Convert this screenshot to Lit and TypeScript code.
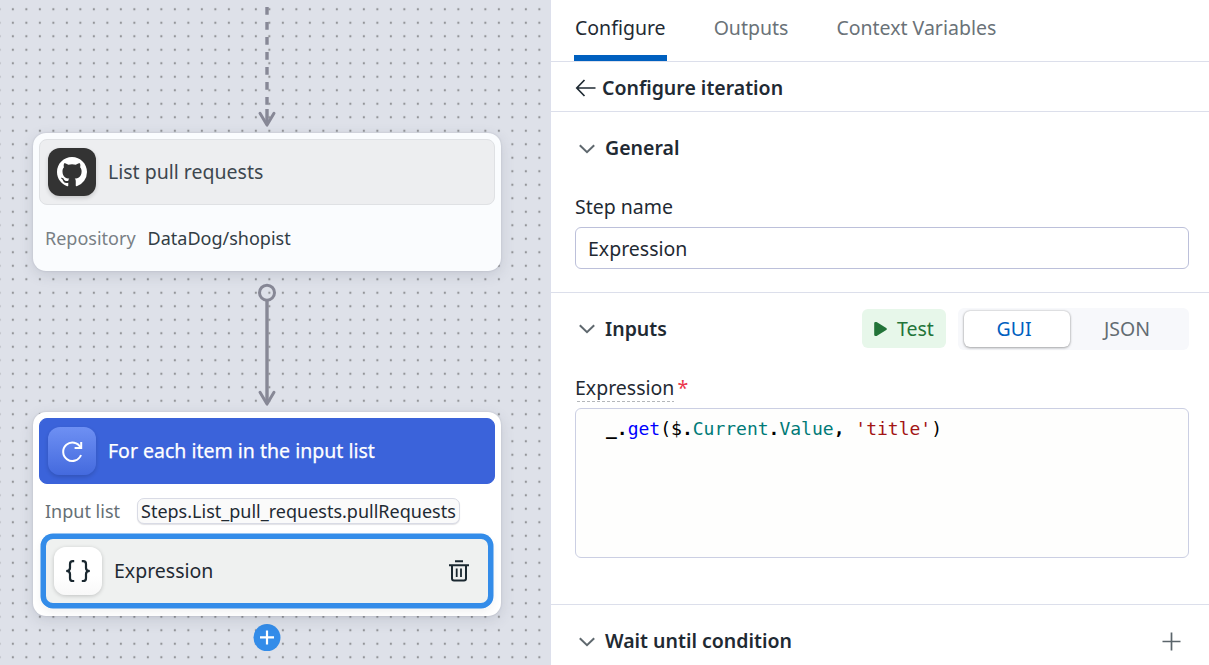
import { LitElement, html, css, svg } from "lit";
import { customElement, property } from "lit/decorators.js";

const chevron = html`<svg width="16" height="10" viewBox="0 0 16 10" fill="none">
  <path d="M0.8 1.2 L8 8.2 L15.2 1.2" stroke="#5f686e" stroke-width="2" />
</svg>`;

@customElement("flow-canvas")
export class FlowCanvas extends LitElement {
  static styles = css`
    :host {
      display: block;
      position: relative;
      overflow: hidden;
      background: #dee1e9;
      color: #1f2a33;
    }
    .backdrop {
      position: absolute;
      inset: 0;
      width: 100%;
      height: 100%;
    }
    .card {
      position: absolute;
      left: 33px;
      width: 468px;
      box-sizing: border-box;
      padding: 6px;
      border-radius: 13px;
      box-shadow: 0 0 2px rgba(60, 65, 90, 0.2), 0 4px 14px rgba(60, 65, 90, 0.15);
    }
    .source {
      top: 133px;
      height: 138px;
      background: #fafcfe;
    }
    .loop {
      top: 412px;
      height: 204px;
      background: #fff;
    }
    .head {
      display: flex;
      align-items: center;
      gap: 12px;
      box-sizing: border-box;
      height: 66px;
      padding: 0 8px;
      border: 1px solid #dfe1e4;
      border-radius: 8px;
      background: #edeef0;
      color: #3d474f;
      line-height: 26px;
    }
    .loop .head {
      background: #3b63da;
      border-color: #3b63da;
      color: #fff;
      -webkit-text-stroke: 0.25px #fff;
    }
    .tile {
      display: flex;
      align-items: center;
      justify-content: center;
      flex: none;
      width: 48px;
      height: 48px;
      border-radius: 12px;
      background: #333;
      box-shadow: 0 2px 4px rgba(0, 0, 0, 0.16);
    }
    .tile.repeat {
      background: linear-gradient(#6e90f3, #446ade);
    }
    .tile.code {
      background: linear-gradient(#fff 60%, #f8f8f8);
      box-shadow: 0 1px 4px rgba(0, 0, 0, 0.2);
    }
    .field {
      display: flex;
      align-items: center;
      padding-left: 6px;
      font-size: 18px;
      line-height: 26px;
    }
    .source .field {
      margin-top: 20px;
      gap: 12px;
      color: #323d45;
    }
    .key {
      color: #787f85;
    }
    .loop .field {
      margin-top: 14px;
      gap: 17px;
    }
    .loop .key {
      color: #666f75;
    }
    .chip {
      box-sizing: border-box;
      height: 26px;
      line-height: 24px;
      padding: 0 3.5px 0 3px;
      border: 1px solid #d9dbe5;
      border-radius: 7px;
      background: #fafafa;
      box-shadow: 0 1px 1px rgba(50, 50, 70, 0.14);
      white-space: nowrap;
    }
    .step {
      display: flex;
      align-items: center;
      box-sizing: border-box;
      margin: 10px 2px 0;
      height: 74px;
      padding: 0 19px 0 8px;
      border: 5px solid #338ce9;
      border-radius: 12px;
      background: #eff1f0;
      box-shadow: 0 0 0 0.5px #338ce9, 0 4px 10px rgba(0, 0, 0, 0.06);
    }
    .step-name {
      flex: 1;
      padding-left: 12px;
      line-height: 26px;
    }
  `;

  render() {
    return html`
      <svg class="backdrop">
        <defs>
          <pattern id="dots" x="6.1" y="2.5" width="13.5" height="13.5" patternUnits="userSpaceOnUse">
            <circle cx="6.75" cy="6.75" r="1.15" fill="#929498" />
          </pattern>
        </defs>
        <rect width="100%" height="100%" fill="url(#dots)" />
        <g stroke="#878896" stroke-width="3.4" fill="none">
          <path d="M267 7 V106" stroke-dasharray="7.7 7.3" />
          <path d="M267 109 V124" />
          ${this.arrowTip(126.6)}
          <circle cx="267" cy="292.7" r="7.5" stroke-width="3" />
          <path d="M267 300 V403" />
          ${this.arrowTip(405.6)}
        </g>
        <circle cx="267" cy="637.6" r="13.5" fill="#338ce9" />
        <path d="M267 630.4 V644.4 M260 637.4 H274" stroke="#fff" stroke-width="2.2" />
      </svg>
      <section class="card source">
        <div class="head">
          <div class="tile">
            <svg width="30" height="30" viewBox="0 0 16 16" fill="#fff">
              <path
                d="M8 0C3.58 0 0 3.58 0 8c0 3.54 2.29 6.53 5.47 7.59.4.07.55-.17.55-.38 0-.19-.01-.82-.01-1.49-2.01.37-2.53-.49-2.69-.94-.09-.23-.48-.94-.82-1.13-.28-.15-.68-.52-.01-.53.63-.01 1.08.58 1.23.82.72 1.21 1.87.87 2.33.66.07-.52.28-.87.51-1.07-1.78-.2-3.64-.89-3.64-3.95 0-.87.31-1.59.82-2.15-.08-.2-.36-1.02.08-2.12 0 0 .67-.21 2.2.82.64-.18 1.32-.27 2-.27s1.36.09 2 .27c1.53-1.04 2.2-.82 2.2-.82.44 1.1.16 1.92.08 2.12.51.56.82 1.27.82 2.15 0 3.07-1.87 3.75-3.65 3.95.29.25.54.73.54 1.48 0 1.07-.01 1.93-.01 2.2 0 .21.15.46.55.38A8.01 8.01 0 0 0 16 8c0-4.42-3.58-8-8-8z"
              />
            </svg>
          </div>
          <span>List pull requests</span>
        </div>
        <div class="field"><span class="key">Repository</span><span>DataDog/shopist</span></div>
      </section>
      <section class="card loop">
        <div class="head">
          <div class="tile repeat">
            <svg width="24" height="24" viewBox="0 0 24 24" fill="none" stroke="#fff" stroke-width="2">
              <path d="M21 16 A9.2 9.2 0 1 1 20.6 8.6" />
              <path d="M21.2 3 V9 H14.6" />
            </svg>
          </div>
          <span>For each item in the input list</span>
        </div>
        <div class="field">
          <span class="key">Input list</span><span class="chip">Steps.List_pull_requests.pullRequests</span>
        </div>
        <div class="step">
          <div class="tile code">
            <svg width="26" height="24" viewBox="0 0 26 24" fill="none" stroke="#1a2830" stroke-width="2.2">
              <path
                d="M9.2 2.2 H7.8 Q5 2.2 5 5 V9 Q5 12 1.2 12 Q5 12 5 15 V19.2 Q5 22 7.8 22 H9.2 M16.8 2.2 H18.2 Q21 2.2 21 5 V9 Q21 12 24.8 12 Q21 12 21 15 V19.2 Q21 22 18.2 22 H16.8"
              />
            </svg>
          </div>
          <span class="step-name">Expression</span>
          <svg width="20" height="22" viewBox="0 0 20 22" fill="none" stroke="#1a2830" stroke-width="2">
            <path d="M6 1.2 H14 M0 5.2 H20.5 M3 5.2 V18.4 Q3 20.4 5 20.4 H15 Q17 20.4 17 18.4 V5.2" />
            <path d="M7.7 8.6 V17 M12 8.6 V17" stroke-width="1.8" />
          </svg>
        </div>
      </section>
    `;
  }

  private arrowTip(y: number) {
    return svg`<path d="M260 ${y - 13.4} L267 ${y - 1.5} L274 ${y - 13.4}" stroke-linecap="round" stroke-linejoin="round" stroke-width="3" />`;
  }
}

@customElement("config-panel")
export class ConfigPanel extends LitElement {
  @property({ type: Array }) tabs = ["Configure", "Outputs", "Context Variables"];

  static styles = css`
    :host {
      display: block;
      border-left: 1px solid #dde0ec;
      background: #fff;
      color: #1f2a33;
      line-height: 27px;
      overflow: hidden;
    }
    .tabs {
      display: flex;
      gap: 46px;
      height: 61px;
      padding-left: 23px;
      border-bottom: 1px solid #dcdfeb;
      color: #6a7278;
    }
    .tab {
      box-sizing: border-box;
      height: 61px;
      line-height: 55px;
      padding: 0 1px;
    }
    .tab.active {
      color: #1f2a33;
      border-bottom: 6px solid #0060bf;
    }
    .crumb {
      display: flex;
      align-items: center;
      gap: 6px;
      box-sizing: border-box;
      height: 50px;
      padding: 2px 0 0 24px;
      border-bottom: 1px solid #dcdfeb;
      font-weight: 600;
    }
    section {
      padding: 22px 20px 23px 24px;
      border-bottom: 1px solid #dcdfeb;
    }
    .inputs {
      padding-top: 15px;
      padding-bottom: 46px;
    }
    .inputs .heading {
      height: 42px;
    }
    .inputs .title {
      padding-bottom: 1px;
    }
    .wait {
      border: 0;
    }
    .heading {
      display: flex;
      align-items: center;
    }
    .title {
      flex: 1;
      padding-left: 10px;
      font-weight: 600;
    }
    .heading > svg {
      margin: 3px 0 0 4px;
    }
    .inputs .heading > svg {
      margin-top: 0;
    }
    .heading > .add {
      margin: 1px 8px 0 0;
    }
    .label {
      display: flex;
      margin: 32px 0 7px;
    }
    .inputs .label {
      margin: 24px 0 6px;
    }
    .hinted {
      height: 27px;
      background: repeating-linear-gradient(90deg, #b4b7ba 0 3px, transparent 3px 5px) 2px 100% / 100% 1px no-repeat;
      padding-bottom: 1px;
    }
    .required {
      padding-left: 3px;
      color: #eb364b;
    }
    .input {
      box-sizing: border-box;
      height: 42px;
      line-height: 42px;
      padding-left: 12px;
      border: 1px solid #bcc0da;
      border-radius: 6px;
    }
    .test {
      display: flex;
      align-items: center;
      gap: 9px;
      box-sizing: border-box;
      width: 84px;
      height: 39px;
      padding-left: 12px;
      margin: 0 12px 1px 0;
      border-radius: 6px;
      background: #e7f7ea;
      color: #237439;
    }
    .modes {
      display: flex;
      align-items: center;
      box-sizing: border-box;
      width: 231px;
      height: 42px;
      padding: 0 6px;
      border-radius: 6px;
      background: #f7f8fb;
      color: #636c72;
    }
    .mode {
      flex: 1;
      height: 36px;
      line-height: 36px;
      padding-left: 1px;
      text-align: center;
    }
    .mode.on {
      flex: none;
      box-sizing: border-box;
      width: 106px;
      padding: 0 6px 0 0;
      border-radius: 6px;
      background: #fff;
      color: #0060bf;
      box-shadow: 0 0 2px rgba(0, 0, 0, 0.25), 0 1px 3px rgba(0, 0, 0, 0.28);
    }
    .editor {
      box-sizing: border-box;
      height: 150px;
      padding: 9px 0 0 30px;
      border: 1px solid #cbcfe3;
      border-radius: 6px;
      background: #fefefd;
      color: #000;
      font: 18px / 22px "DejaVu Sans Mono", monospace;
      white-space: pre;
    }
    .punct {
      font-weight: 700;
    }
    .fn {
      color: #0000ff;
    }
    .prop {
      color: #007a77;
    }
    .str {
      color: #a31515;
    }
  `;

  render() {
    return html`
      <nav class="tabs">
        ${this.tabs.map((t, i) => html`<span class="tab ${i === 0 ? "active" : ""}">${t}</span>`)}
      </nav>
      <div class="crumb">
        <svg width="21" height="18" viewBox="0 0 21 18" fill="none" stroke="#1f2a33" stroke-width="1.7">
          <path d="M20.5 9 H2 M9.5 1 L1.8 9 L9.5 17" />
        </svg>
        <span>Configure iteration</span>
      </div>
      <section>
        <div class="heading">${chevron}<span class="title">General</span></div>
        <div class="label">Step name</div>
        <div class="input">Expression</div>
      </section>
      <section class="inputs">
        <div class="heading">
          ${chevron}<span class="title">Inputs</span>
          <div class="test">
            <svg width="14" height="16" viewBox="0 0 14 16" fill="#237439" stroke="#237439" stroke-width="2.4" stroke-linejoin="round">
              <path d="M1.4 2.2 H2.4 L11.6 8 L2.4 13.8 H1.4 Z" />
            </svg>
            <span>Test</span>
          </div>
          <div class="modes"><span class="mode on">GUI</span><span class="mode">JSON</span></div>
        </div>
        <div class="label"><span class="hinted">Expression</span><span class="required">*</span></div>
        <div class="editor"><span class="punct">_.</span><span class="fn">get</span>($<span class="punct">.</span><span class="prop">Current</span><span class="punct">.</span><span class="prop">Value</span><span class="punct">,</span> <span class="str">'title'</span>)</div>
      </section>
      <section class="wait">
        <div class="heading">
          ${chevron}<span class="title">Wait until condition</span>
          <svg class="add" width="19" height="19" viewBox="0 0 19 19" stroke="#5b656b" stroke-width="1.7">
            <path d="M9.5 0.5 V18.5 M0.5 9.5 H18.5" />
          </svg>
        </div>
      </section>
    `;
  }
}

@customElement("app-root")
export class AppRoot extends LitElement {
  static styles = css`
    :host {
      display: grid;
      grid-template-columns: 550px 1fr;
      height: 100vh;
      overflow: hidden;
      font-family: "Noto Sans", sans-serif;
      font-size: 19.5px;
    }
  `;

  render() {
    return html`<flow-canvas></flow-canvas><config-panel></config-panel>`;
  }
}
